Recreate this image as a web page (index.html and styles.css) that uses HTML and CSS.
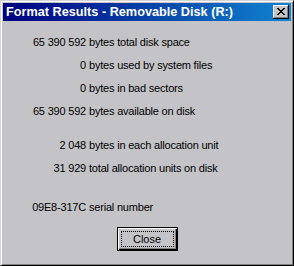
FILE: index.html
```html
<!DOCTYPE html>
<html lang="en">
<head>
  <meta charset="UTF-8">
  <title>Format Results - Removable Disk (R:)</title>
  <link rel="stylesheet" href="styles.css">
</head>
<body>

  <!-- Dialog window -->
  <div class="window">
    <div class="titlebar">
      <span class="title">Format Results - Removable Disk (R:)</span>
      <button class="close-x" aria-label="Close">
        <svg width="8" height="7" viewBox="0 0 8 7">
          <path d="M0 0h2v1h1v1h2v-1h1v-1h2v1h-1v1h-1v1h-1v1h1v1h1v1h1v1h-2v-1h-1v-1h-2v1h-1v1h-2v-1h1v-1h1v-1h1v-1h-1v-1h-1v-1h-1z" fill="#000"/>
        </svg>
      </button>
    </div>

    <div class="results">
      <span class="num">65 390 592</span><span class="label">bytes total disk space</span>
      <span class="num">0</span><span class="label">bytes used by system files</span>
      <span class="num">0</span><span class="label">bytes in bad sectors</span>
      <span class="num">65 390 592</span><span class="label">bytes available on disk</span>

      <span class="num group">2 048</span><span class="label group">bytes in each allocation unit</span>
      <span class="num">31 929</span><span class="label">total allocation units on disk</span>

      <span class="num serial">09E8-317C</span><span class="label serial">serial number</span>
    </div>

    <div class="actions">
      <button class="btn-close"><span class="focus">Close</span></button>
    </div>
  </div>

</body>
</html>
```

FILE: styles.css
```css
* {
  margin: 0;
  padding: 0;
  box-sizing: border-box;
}

body {
  background: #c4c4c8;
  font-family: 'Liberation Sans', Arial, sans-serif;
  font-size: 11px;
  color: #000;
}

.window {
  width: 294px;
  height: 266px;
  background: #c4c4c8;
  border-top: 1px solid #d4d4d8;
  border-left: 1px solid #d4d4d8;
  border-right: 1px solid #000;
  border-bottom: 1px solid #000;
  box-shadow: inset 1px 1px 0 #fff, inset -1px -1px 0 #808080;
  padding: 2px;
  display: flex;
  flex-direction: column;
}

.titlebar {
  height: 18px;
  background: linear-gradient(to right, #000080, #1084d0);
  display: flex;
  align-items: center;
  justify-content: space-between;
  padding: 0 2px 0 3px;
}

.title {
  color: #fff;
  font-weight: bold;
  font-size: 12.7px;
}

.close-x {
  width: 16px;
  height: 14px;
  background: #c4c4c8;
  border: none;
  box-shadow: inset -1px -1px 0 #000, inset 1px 1px 0 #fff, inset -2px -2px 0 #808080;
  display: flex;
  align-items: center;
  justify-content: center;
  padding-bottom: 1px;
}

.results {
  display: grid;
  grid-template-columns: 83px 1fr;
  column-gap: 3px;
  line-height: 23px;
  padding-top: 10px;
  letter-spacing: -0.2px;
}

.num {
  text-align: right;
}

.group {
  margin-top: 11px;
}

.serial {
  margin-top: 16px;
}

.actions {
  display: flex;
  justify-content: center;
  padding-top: 8px;
}

.btn-close {
  width: 61px;
  height: 24px;
  background: #c4c4c8;
  border: 1px solid #000;
  box-shadow: inset 1px 1px 0 #fff, inset -1px -1px 0 #000, inset -2px -2px 0 #808080;
  font-family: 'Liberation Sans', Arial, sans-serif;
  font-size: 11px;
  color: #000;
  padding: 3px;
  display: flex;
}

.focus {
  flex: 1;
  border: 1px dotted #000;
  display: flex;
  align-items: center;
  justify-content: center;
}
```
